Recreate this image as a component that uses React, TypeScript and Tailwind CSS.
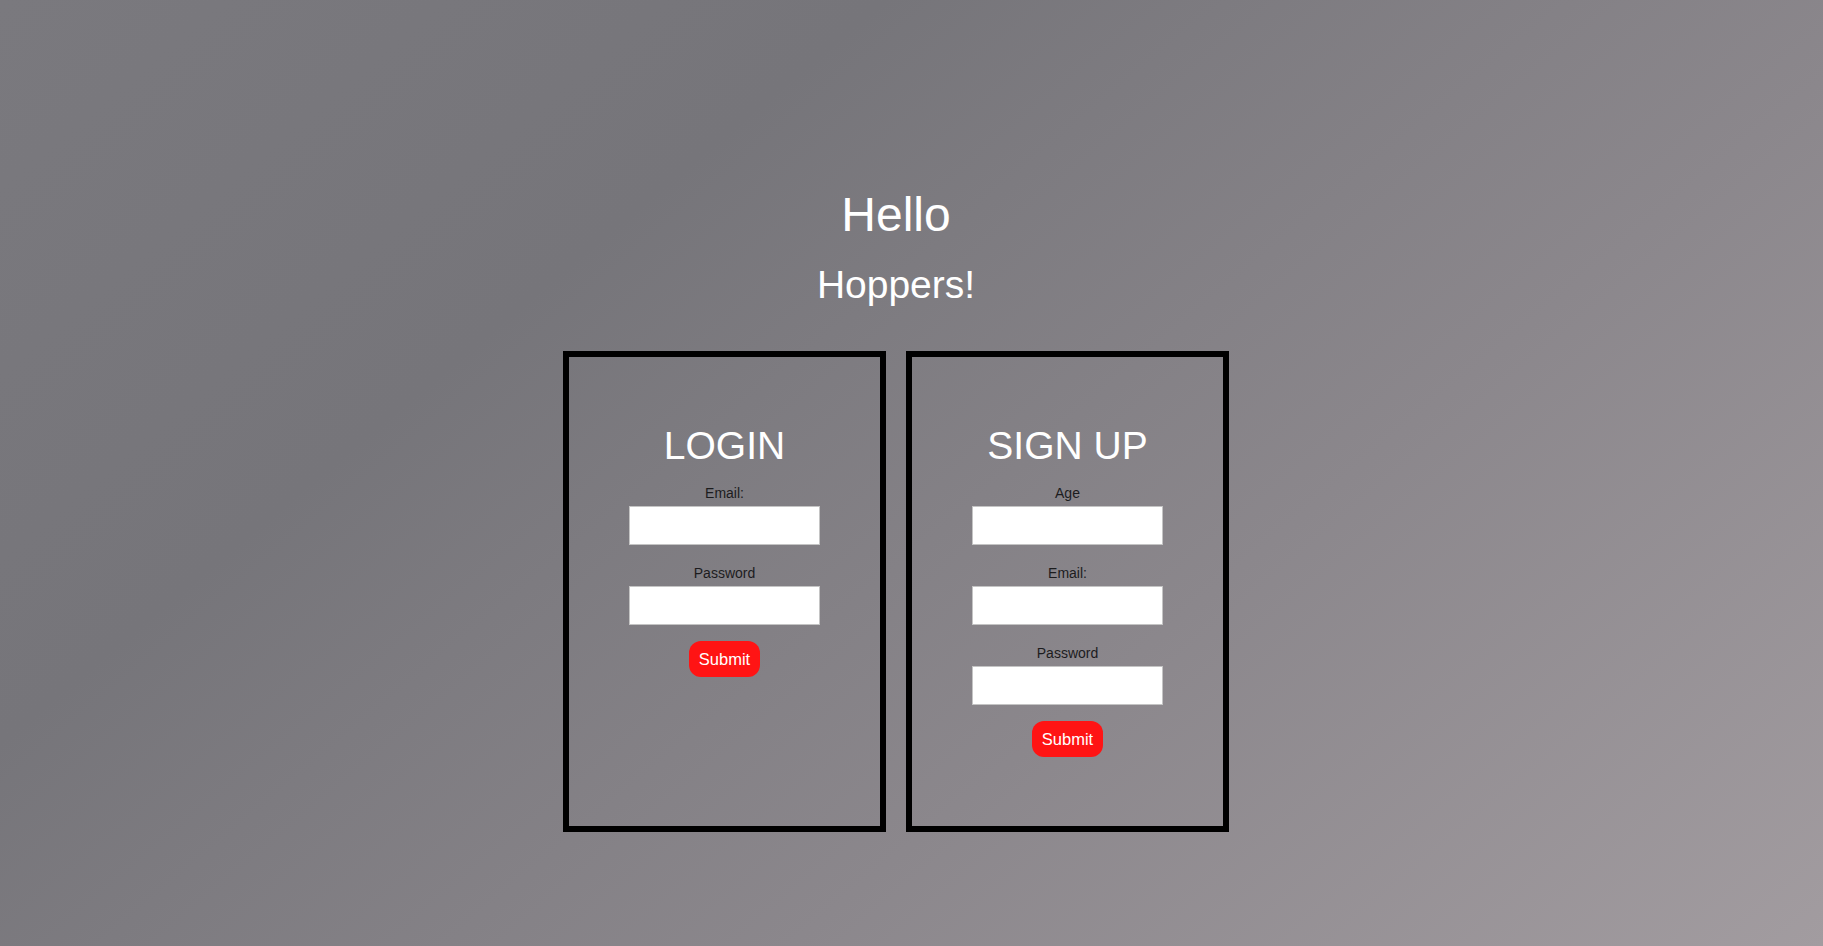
import React from "react";

function Field({ label }: { label: string }) {
  return (
    <div className="flex flex-col items-center">
      <label className="mt-[21px] text-[14px] leading-none text-[#1c1c1e]">{label}</label>
      <input
        type="text"
        className="mt-[6px] h-[39px] w-[191px] border border-[#c4c4c4] bg-white outline-none"
      />
    </div>
  );
}

function Card({ title, fields }: { title: string; fields: string[] }) {
  return (
    <div className="flex h-[481px] w-[323px] flex-col items-center border-[6px] border-black pt-[69px]">
      <h2 className="text-[39px] font-normal leading-none text-white">{title}</h2>
      {fields.map((f) => (
        <Field key={f} label={f} />
      ))}
      <button className="mt-[16px] h-[36px] w-[71px] rounded-[12px] bg-[#ff1414] text-[16.5px] leading-none text-white">
        Submit
      </button>
    </div>
  );
}

export default function App() {
  return (
    <div
      className="flex min-h-[946px] w-full flex-col items-center bg-[linear-gradient(140deg,#7a797e_0%,#76757a_30%,#8b878c_65%,#a29ca0_100%)] pr-[31px] pt-[191px]"
      style={{ fontFamily: '"Liberation Sans", Arial, sans-serif' }}
    >
      <h1 className="text-[48px] font-normal leading-none text-white">Hello</h1>
      <p className="mt-[26px] text-[39px] leading-none text-white">Hoppers!</p>
      <div className="mt-[47px] flex gap-[20px]">
        <Card title="LOGIN" fields={["Email:", "Password"]} />
        <Card title="SIGN UP" fields={["Age", "Email:", "Password"]} />
      </div>
    </div>
  );
}
